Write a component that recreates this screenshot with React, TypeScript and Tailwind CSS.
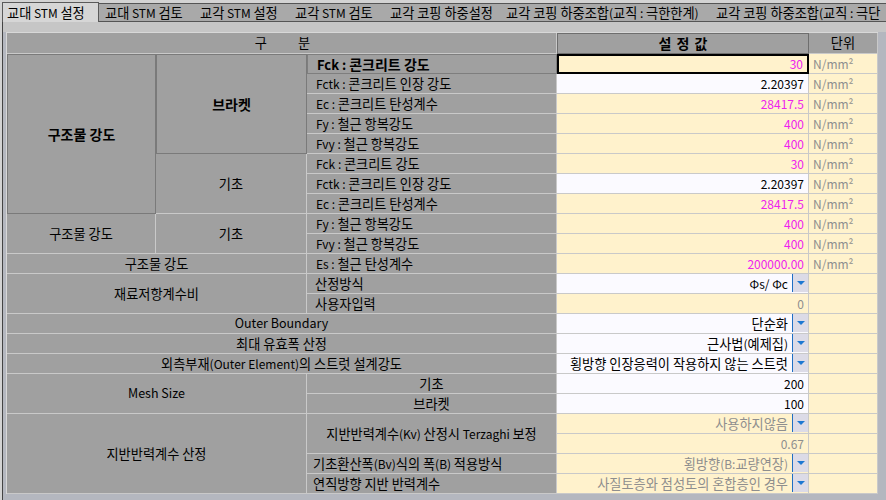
import React from "react";
import clsx from "clsx";

type V = { v: string; c: "m" | "b" | "g"; bg: "y" | "w"; u?: boolean; dd?: boolean; focus?: boolean };

const vals: V[] = [
  { v: "30", c: "m", bg: "y", u: true, focus: true },
  { v: "2.20397", c: "b", bg: "w", u: true },
  { v: "28417.5", c: "m", bg: "y", u: true },
  { v: "400", c: "m", bg: "y", u: true },
  { v: "400", c: "m", bg: "y", u: true },
  { v: "30", c: "m", bg: "y", u: true },
  { v: "2.20397", c: "b", bg: "w", u: true },
  { v: "28417.5", c: "m", bg: "y", u: true },
  { v: "400", c: "m", bg: "y", u: true },
  { v: "400", c: "m", bg: "y", u: true },
  { v: "200000.00", c: "m", bg: "y", u: true },
  { v: "Φs/ Φc", c: "b", bg: "w", dd: true },
  { v: "0", c: "g", bg: "y" },
  { v: "단순화", c: "b", bg: "w", dd: true },
  { v: "근사법(예제집)", c: "b", bg: "w", dd: true },
  { v: "횡방향 인장응력이 작용하지 않는 스트럿", c: "b", bg: "w", dd: true },
  { v: "200", c: "b", bg: "w" },
  { v: "100", c: "b", bg: "w" },
  { v: "사용하지않음", c: "g", bg: "y", dd: true },
  { v: "0.67", c: "g", bg: "y" },
  { v: "횡방향(B:교량연장)", c: "g", bg: "y", dd: true },
  { v: "사질토층와 점성토의 혼합층인 경우", c: "g", bg: "y", dd: true },
];

const col3 = [
  { t: "Fck : 콘크리트 강도", b: true, cls: "row-start-2 font-bold text-[13px] border border-[#7e7e7e] justify-start pl-[9px]" },
  { t: "Fctk : 콘크리트 인장 강도", cls: "row-start-3 justify-start pl-[9px]" },
  { t: "Ec : 콘크리트 탄성계수", cls: "row-start-4 justify-start pl-[9px]" },
  { t: "Fy : 철근 항복강도", cls: "row-start-5 justify-start pl-[9px]" },
  { t: "Fvy : 철근 항복강도", cls: "row-start-6 justify-start pl-[9px]" },
  { t: "Fck : 콘크리트 강도", cls: "row-start-7 justify-start pl-[9px]" },
  { t: "Fctk : 콘크리트 인장 강도", cls: "row-start-8 justify-start pl-[9px]" },
  { t: "Ec : 콘크리트 탄성계수", cls: "row-start-9 justify-start pl-[9px]" },
  { t: "Fy : 철근 항복강도", cls: "row-start-10 justify-start pl-[9px]" },
  { t: "Fvy : 철근 항복강도", cls: "row-start-11 justify-start pl-[9px]" },
  { t: "Es : 철근 탄성계수", cls: "row-start-12 justify-start pl-[9px]" },
  { t: "산정방식", cls: "row-start-13 justify-start pl-[8px]" },
  { t: "사용자입력", cls: "row-start-14 justify-start pl-[8px]" },
  { t: "기초", cls: "row-start-18 justify-center" },
  { t: "브라켓", cls: "row-start-19 justify-center" },
  { t: "지반반력계수(Kv) 산정시 Terzaghi 보정", cls: "row-start-20 row-span-2 justify-center" },
  { t: "기초환산폭(Bv)식의 폭(B) 적용방식", cls: "row-start-22 justify-start pl-[6px]" },
  { t: "연직방향 지반 반력계수", cls: "row-start-23 justify-start pl-[6px]" },
];

const LINE = "border-r border-b border-[#c9c9c9]";

const left = [
  { t: "구조물 강도", b: true, cls: "col-start-1 row-start-2 row-span-8 font-bold text-[13px] border border-[#7a7a7a]" },
  { t: "브라켓", b: true, cls: "col-start-2 row-start-2 row-span-5 font-bold text-[13px] border border-[#7a7a7a]" },
  { t: "기초", cls: "col-start-2 row-start-7 row-span-3 border-r border-b border-[#c9c9c9]" },
  { t: "구조물 강도", cls: "col-start-1 row-start-10 row-span-2 border-r border-b border-[#c9c9c9]" },
  { t: "기초", cls: "col-start-2 row-start-10 row-span-2 border-r border-b border-[#c9c9c9]" },
  { t: "구조물 강도", cls: "col-start-1 col-span-2 row-start-12 border-r border-b border-[#c9c9c9]" },
  { t: "재료저항계수비", cls: "col-start-1 col-span-2 row-start-13 row-span-2 border-r border-b border-[#c9c9c9]" },
  { t: "Outer Boundary", cls: "col-start-1 col-span-3 row-start-15 border-r border-b border-[#c9c9c9] text-[12.5px]" },
  { t: "최대 유효폭 산정", cls: "col-start-1 col-span-3 row-start-16 border-r border-b border-[#c9c9c9]" },
  { t: "외측부재(Outer Element)의 스트럿 설계강도", cls: "col-start-1 col-span-3 row-start-17 border-r border-b border-[#c9c9c9]" },
  { t: "Mesh Size", cls: "col-start-1 col-span-2 row-start-18 row-span-2 border-r border-b border-[#c9c9c9] text-[12.5px]" },
  { t: "지반반력계수 산정", cls: "col-start-1 col-span-2 row-start-20 row-span-4 border-r border-b border-[#c9c9c9]" },
];

const tabs = [
  { t: "교대 STM 검토", w: "w-[95px]" },
  { t: "교각 STM 설정", w: "w-[95px]" },
  { t: "교각 STM 검토", w: "w-[95px]" },
  { t: "교각 코핑 하중설정", w: "w-[116px]" },
  { t: "교각 코핑 하중조합(교직 : 극한한계)", w: "w-[210px]" },
  { t: "교각 코핑 하중조합(교직 : 극단", w: "w-[200px]" },
];

const HANGUL = /([\uAC00-\uD7A3]+(?:\s+[\uAC00-\uD7A3]+)*)/g;

function K({ s, b }: { s: string; b?: boolean }) {
  const parts = s.split(HANGUL);
  return (
    <span className="whitespace-pre">
      {parts.map((p, i) =>
        i % 2 === 1 ? (
          <span key={i} className={b ? "text-[14px]" : "text-[13.2px]"}>
            {p}
          </span>
        ) : (
          <React.Fragment key={i}>{p}</React.Fragment>
        )
      )}
    </span>
  );
}

function Drop() {
  return (
    <div className="w-[16px] self-stretch mb-px shrink-0 bg-[#dcdbe7] border-l border-[#1f6fc4] flex items-center justify-center">
      <svg width="8" height="4" viewBox="0 0 8 4">
        <polygon points="0,0 8,0 4,4" fill="#1d78d2" />
      </svg>
    </div>
  );
}

export default function App() {
  return (
    <div className="w-[886px] h-[500px] overflow-hidden bg-[#d3d3d3] flex flex-col text-[12px] text-black font-['Noto_Sans_CJK_KR','Noto_Sans',sans-serif]">
      {/* tab strip */}
      <div className="h-[22px] shrink-0 flex items-end pl-[2px]">
        <div className="h-[20px] w-[97px] shrink-0 bg-[#d6d6d6] border-l border-t border-r border-[#5a5a5a] pl-[4px] flex items-center whitespace-nowrap">
          <K s="교대 STM 설정" />
        </div>
        <div className="h-[19px] flex-1 flex bg-[#a9a9a9] border-t border-b border-[#555555] overflow-hidden">
          {tabs.map((t, i) => (
            <div key={i} className={clsx("shrink-0 pl-[6px] flex items-center whitespace-nowrap", t.w)}>
              <K s={t.t} />
            </div>
          ))}
        </div>
      </div>
      {/* tab page */}
      <div className="flex-1 ml-[2px] border-l border-[#444444] bg-[#c6c6c6] pt-[10px] flex flex-col">
        <div className="flex-1 bg-[#b4b7bf] pl-[3px]">
          <div className="w-max grid grid-cols-[149px_151px_250px_252px_69px] grid-rows-[21px_repeat(22,20px)] border-l border-t border-[#d8d8d8]">
            {/* header */}
            <div className="col-start-1 col-span-3 row-start-1 bg-[#a0a0a0] border-r border-b border-[#c9c9c9] flex items-center justify-center gap-[31px] pl-[2px]">
              <span className="text-[13.2px]">구</span>
              <span className="text-[13.2px]">분</span>
            </div>
            <div className="col-start-4 row-start-1 bg-[#a0a0a0] border border-[#6e6e6e] flex items-center justify-center font-bold text-[14px] tracking-[1px] pl-[1px]">
              설 정 값
            </div>
            <div className="col-start-5 row-start-1 bg-[#a0a0a0] border-r border-b border-[#c9c9c9] flex items-center justify-center">
              <K s="단위" />
            </div>
            {left.map((l, i) => (
              <div key={"l" + i} className={clsx("bg-[#a0a0a0] flex items-center justify-center whitespace-nowrap", l.cls)}>
                <K s={l.t} b={l.b} />
              </div>
            ))}
            {col3.map((l, i) => (
              <div
                key={"c" + i}
                className={clsx(
                  "col-start-3 bg-[#a0a0a0] flex items-center whitespace-nowrap",
                  !l.b && LINE,
                  l.cls
                )}
              >
                <K s={l.t} b={l.b} />
              </div>
            ))}
            {vals.map((v, i) => (
              <React.Fragment key={"v" + i}>
                <div
                  className={clsx(
                    "flex items-center whitespace-nowrap",
                    v.focus ? "border-2 border-black" : "border-r border-b border-[#c9c9c9]",
                    v.bg === "y" ? "bg-[#fff2cc]" : "bg-[#fbfaff]",
                    v.dd ? "pr-0" : "pr-[4px]"
                  )}
                >
                  <span
                    className={clsx(
                      "flex-1 text-right",
                      v.dd && "pr-[4px]",
                      v.c === "m" && "text-[#ee22ee]",
                      v.c === "b" && "text-black",
                      v.c === "g" && "text-[#8e8e8e]"
                    )}
                  >
                    <K s={v.v} />
                  </span>
                  {v.dd && <Drop />}
                </div>
                <div className="bg-[#fff2cc] border-r border-b border-[#c9c9c9] flex items-center pl-[4px] text-[#8e8e8e]">
                  {v.u ? "N/mm²" : ""}
                </div>
              </React.Fragment>
            ))}
          </div>
        </div>
      </div>
    </div>
  );
}
